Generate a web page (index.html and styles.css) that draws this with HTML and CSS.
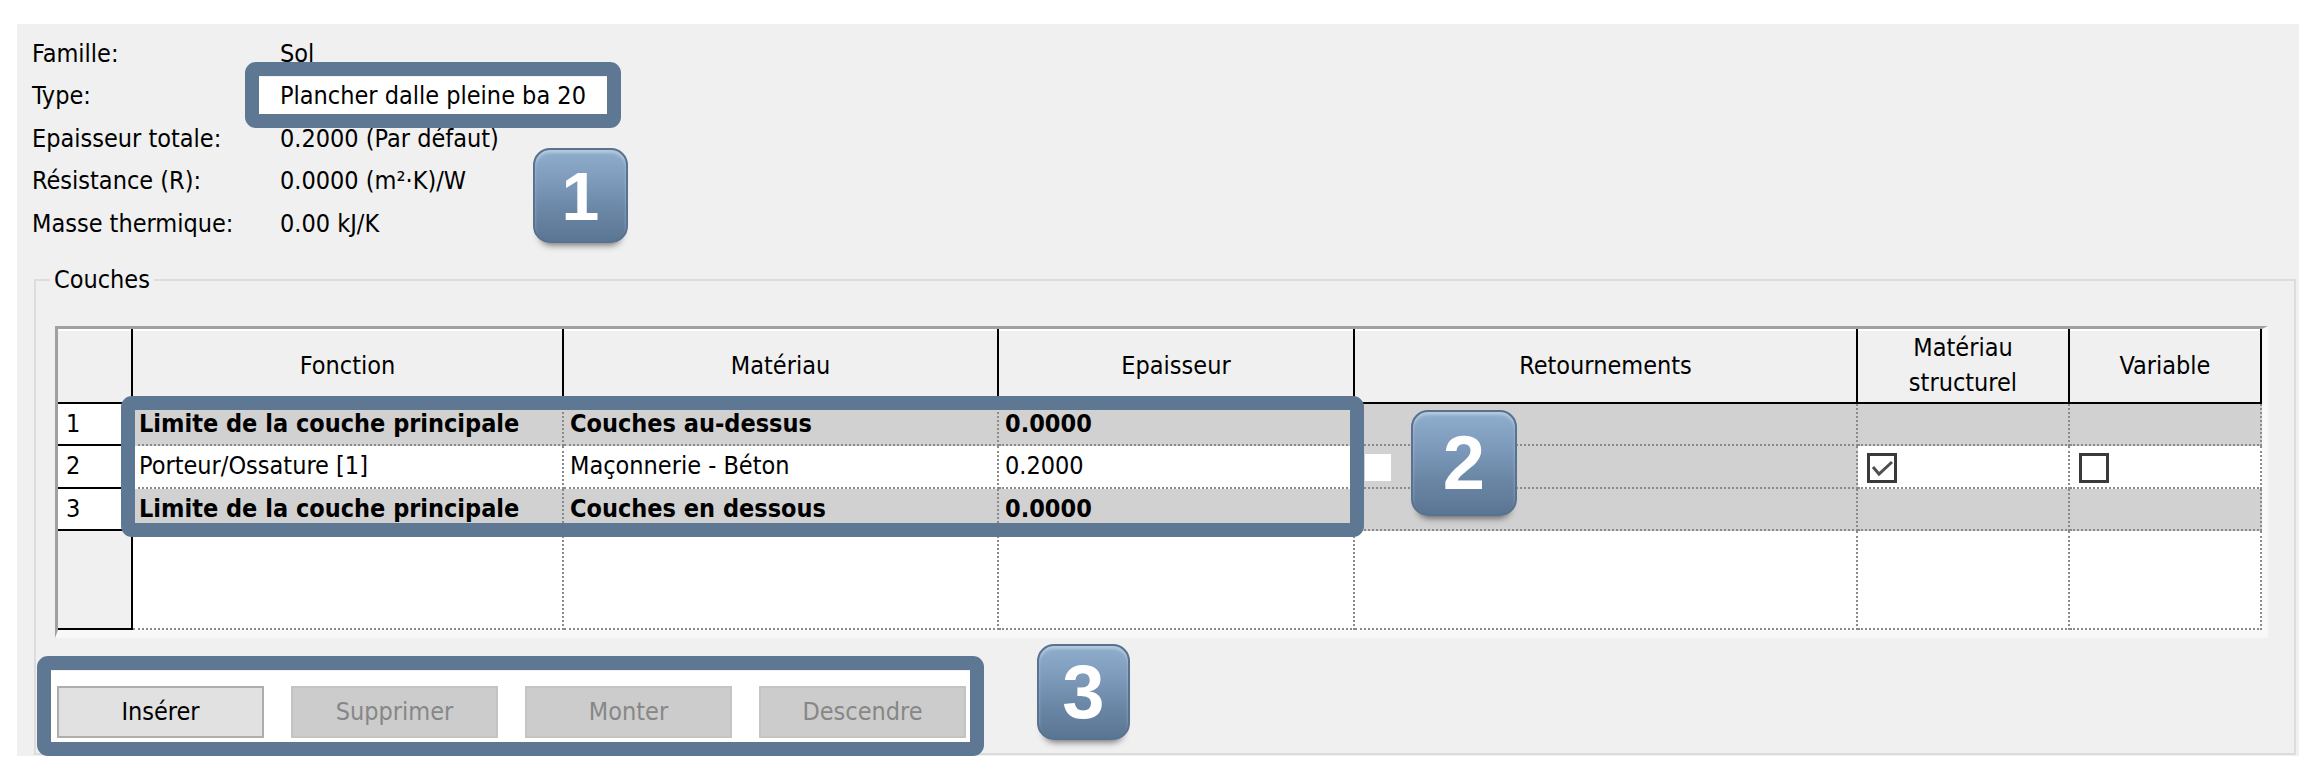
FILE: index.html
```html
<!DOCTYPE html>
<html lang="fr">
<head>
<meta charset="utf-8">
<title>Propriétés du type - Couches</title>
<link rel="stylesheet" href="styles.css">
</head>
<body>
<div class="panel">
  <div class="props">
    <div class="lbl">Famille:</div><div class="val">Sol</div>
    <div class="lbl">Type:</div><div class="val"><span class="field">Plancher dalle pleine ba 20</span></div>
    <div class="lbl">Epaisseur totale:</div><div class="val">0.2000 (Par défaut)</div>
    <div class="lbl">Résistance (R):</div><div class="val">0.0000 (m²·K)/W</div>
    <div class="lbl">Masse thermique:</div><div class="val">0.00 kJ/K</div>
  </div>

  <fieldset class="group">
    <legend>Couches</legend>
    <div class="group-body">
      <div class="grid">
        <div class="h"></div>
        <div class="h">Fonction</div>
        <div class="h">Matériau</div>
        <div class="h">Epaisseur</div>
        <div class="h">Retournements</div>
        <div class="h">Matériau<br>structurel</div>
        <div class="h">Variable</div>

        <div class="rh">1</div>
        <div class="c g b">Limite de la couche principale</div>
        <div class="c g b">Couches au-dessus</div>
        <div class="c g b">0.0000</div>
        <div class="c g"></div>
        <div class="c g"></div>
        <div class="c g"></div>

        <div class="rh">2</div>
        <div class="c">Porteur/Ossature [1]</div>
        <div class="c">Maçonnerie - Béton</div>
        <div class="c">0.2000</div>
        <div class="c g"><span class="sq"></span></div>
        <div class="c"><span class="cb"><svg viewBox="0 0 24 24" width="24" height="24"><polyline points="3,11 9,18 22,6" fill="none" stroke="#505050" stroke-width="3"/></svg></span></div>
        <div class="c"><span class="cb"></span></div>

        <div class="rh">3</div>
        <div class="c g b">Limite de la couche principale</div>
        <div class="c g b">Couches en dessous</div>
        <div class="c g b">0.0000</div>
        <div class="c g"></div>
        <div class="c g"></div>
        <div class="c g"></div>

        <div class="rh empty"></div>
        <div class="c"></div>
        <div class="c"></div>
        <div class="c"></div>
        <div class="c"></div>
        <div class="c"></div>
        <div class="c"></div>
      </div>

      <div class="buttons">
        <button class="btn" type="button">Insérer</button>
        <button class="btn" type="button" disabled>Supprimer</button>
        <button class="btn" type="button" disabled>Monter</button>
        <button class="btn" type="button" disabled>Descendre</button>
      </div>
    </div>
  </fieldset>

  <div class="hl hl1"></div>
  <div class="hl hl2"></div>
  <div class="hl hl3"></div>

  <div class="badge b1">1</div>
  <div class="badge b2">2</div>
  <div class="badge b3">3</div>
</div>
</body>
</html>
```

FILE: styles.css
```css
html, body {
  margin: 0;
  background: #ffffff;
}

body {
  font-family: "DejaVu Sans Condensed", "DejaVu Sans", sans-serif;
  font-stretch: condensed;
  font-size: 25px;
  color: #000000;
}

.panel {
  position: relative;
  box-sizing: border-box;
  width: 2282px;
  height: 732px;
  margin: 24px 0 0 17px;
  padding: 8px 3px 0 15px;
  background: #f0f0f0;
}

/* ---------- properties ---------- */
.props {
  display: grid;
  grid-template-columns: 248px 1fr;
  grid-auto-rows: 42.5px;
  align-items: center;
  line-height: 29px;
}

.field {
  display: block;
  box-sizing: border-box;
  width: 348px;
  height: 38px;
  margin-left: -21px;
  padding-left: 21px;
  line-height: 38px;
  background: #ffffff;
}

/* ---------- group box ---------- */
.group {
  margin: 20px 0 0 2px;
  padding: 0;
  border: 2px solid #dcdcdc;
  min-width: 0;
}

.group legend {
  margin-left: 14px;
  padding: 0 4px;
  line-height: 30px;
}

.group-body {
  padding: 31px 26px 10px 19px;
}

/* ---------- layer grid ---------- */
.grid {
  display: grid;
  grid-template-columns: 75px 431px 435px 356px 503px 212px 192px;
  grid-template-rows: 75px 42px 43px 42px 99px;
  border-style: solid;
  border-width: 3px 6px 8px 3px;
  border-color: #a0a0a0 #f8f8f8 #f8f8f8 #a0a0a0;
  background: #ffffff;
}

.grid > div {
  box-sizing: border-box;
  white-space: nowrap;
  overflow: hidden;
}

.h {
  display: flex;
  align-items: center;
  justify-content: center;
  text-align: center;
  line-height: 35px;
  background: #f0f0f0;
  border-right: 2px solid #000000;
  border-bottom: 2px solid #000000;
  box-shadow: inset 0 2px 0 #ffffff;
}

.rh {
  padding-left: 8px;
  line-height: 40px;
  background: #ffffff;
  border-right: 2px solid #000000;
  border-bottom: 2px solid #000000;
}

.rh.empty {
  background: #f0f0f0;
}

.c {
  padding-left: 6px;
  line-height: 40px;
  border-right: 2px dotted #8a8a8a;
  border-bottom: 2px dotted #8a8a8a;
}

.g {
  background: #d1d1d1;
}

.b {
  font-weight: bold;
}

.sq {
  display: block;
  width: 26px;
  height: 27px;
  margin: 8px 0 0 4px;
  background: #ffffff;
}

.cb {
  display: block;
  box-sizing: border-box;
  width: 30px;
  height: 30px;
  margin: 7px 0 0 3px;
  border: 3px solid #3a3a3a;
  background: #ffffff;
}

.cb svg {
  display: block;
}

/* ---------- buttons ---------- */
.buttons {
  display: flex;
  gap: 27px;
  box-sizing: border-box;
  width: 922px;
  margin: 33px 0 0 -4px;
  padding: 15px 7px 5px 6px;
  background: #ffffff;
}

.btn {
  box-sizing: border-box;
  width: 207px;
  height: 52px;
  padding: 0;
  border: 2px solid #adadad;
  background: #e1e1e1;
  color: #000000;
  font: inherit;
}

.btn:disabled {
  border-color: #c4c4c4;
  background: #cccccc;
  color: #878787;
}

/* ---------- callout overlays ---------- */
.hl {
  position: absolute;
  box-sizing: border-box;
  border: 14px solid #5e7893;
  border-radius: 11px;
}

.hl1 { left: 228px; top: 38px; width: 376px; height: 66px; }
.hl2 { left: 104px; top: 372px; width: 1243px; height: 141px; }
.hl3 { left: 20px; top: 632px; width: 947px; height: 100px; }

.badge {
  position: absolute;
  box-sizing: border-box;
  display: flex;
  align-items: center;
  justify-content: center;
  border: 2px solid #587290;
  border-radius: 17px;
  background: linear-gradient(#8fadcc 0%, #7d9abb 35%, #6b87a6 65%, #5b7693 100%);
  box-shadow: 0 9px 7px -7px rgba(0, 0, 0, 0.55), inset 0 3px 3px rgba(255, 255, 255, 0.35);
  color: #ffffff;
  font-family: "Liberation Sans", Arial, sans-serif;
  font-stretch: normal;
  font-weight: bold;
  line-height: 1;
}

.b1 { left: 516px; top: 124px; width: 95px; height: 95px; font-size: 68px; }
.b2 { left: 1394px; top: 386px; width: 106px; height: 106px; font-size: 76px; }
.b3 { left: 1020px; top: 620px; width: 93px; height: 96px; font-size: 76px; }
```
